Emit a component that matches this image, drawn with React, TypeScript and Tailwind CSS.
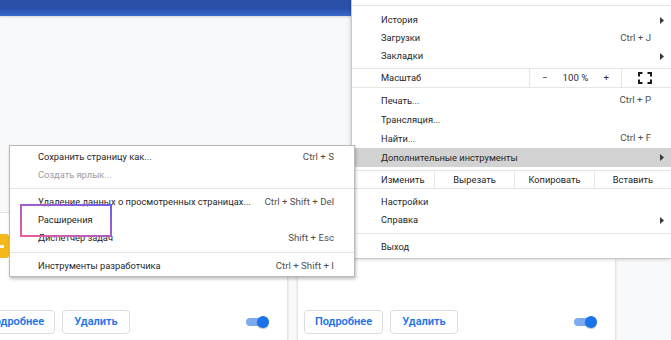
import React from "react";

const menuFont = { fontFamily: 'Roboto, "Noto Sans", sans-serif' };

function Arrow() {
  return (
    <svg width="4" height="7" viewBox="0 0 4 7" className="shrink-0">
      <polygon points="0,0 4,3.5 0,7" fill="#3a3a3a" />
    </svg>
  );
}

function MainRow({
  label,
  shortcut,
  arrow,
  h = "h-[18px]",
  highlight,
}: {
  label: string;
  shortcut?: string;
  arrow?: boolean;
  h?: string;
  highlight?: boolean;
}) {
  return (
    <div
      className={`${h} flex items-center pl-[29px] pr-[7px] ${
        highlight ? "bg-[#d2d2d2]" : ""
      }`}
    >
      <span className="flex-1 text-[#262626]">{label}</span>
      {shortcut && <span className="mr-[13px] text-[9.7px] text-[#505050]">{shortcut}</span>}
      {arrow && <Arrow />}
    </div>
  );
}

function SubRow({
  label,
  shortcut,
  disabled,
}: {
  label: string;
  shortcut?: string;
  disabled?: boolean;
}) {
  return (
    <div className="h-[18px] flex items-center pl-[28px] pr-[20px] whitespace-nowrap">
      <span className={`flex-1 ${disabled ? "text-[#9c9c9c]" : "text-[#262626]"}`}>
        {label}
      </span>
      {shortcut && <span className="text-[9.7px] text-[#505050]">{shortcut}</span>}
    </div>
  );
}

function Card({ withIcon }: { withIcon?: boolean }) {
  return (
    <div className="w-[319px] h-[150px] shrink-0 bg-white border border-[#e3e4e6] rounded-[4px] shadow-[0_1px_2px_rgba(60,64,67,0.15)] flex flex-col">
      <div className="pl-[15px] pt-[21px] h-[46px]">
        {withIcon && (
          <div className="w-[24px] h-[24px] rounded-[3px] bg-[#f5b81c] flex items-center justify-center">
            <div className="w-[14px] h-[3px] bg-white rounded-[1px]" />
          </div>
        )}
      </div>
      <div className="mt-[51px] flex items-center pl-[6px] pr-[18px]" style={{ fontFamily: "Roboto, sans-serif" }}>
        <button className="h-[24px] w-[79px] border border-[#dadce0] rounded-[4px] text-[11px] font-semibold text-[#1a73e8] bg-white">
          Подробнее
        </button>
        <button className="ml-[7px] h-[24px] w-[68px] border border-[#dadce0] rounded-[4px] text-[11px] font-semibold text-[#1a73e8] bg-white">
          Удалить
        </button>
        <div className="flex-1" />
        <div className="relative w-[23px] h-[12px] flex items-center">
          <div className="w-[20px] h-[8px] rounded-full bg-[#7baaf0]" />
          <div className="absolute right-0 top-0 w-[12px] h-[12px] rounded-full bg-[#1a73e8] shadow-[0_1px_1px_rgba(0,0,0,0.25)]" />
        </div>
      </div>
    </div>
  );
}

export default function App() {
  return (
    <div className="relative w-[671px] h-[340px] overflow-hidden bg-[#f8f9fa] text-[9.3px]" style={menuFont}>
      {/* header */}
      <div className="h-[16px] bg-gradient-to-b from-[#2a50a8] from-50% to-[#3769cc] shadow-[0_1px_2px_rgba(0,0,0,0.15)]" />

      {/* cards */}
      <div className="mt-[196px] -ml-[31px] flex gap-[9px]">
        <Card withIcon />
        <Card />
      </div>

      {/* main chrome menu */}
      <div className="absolute left-[351px] top-0 right-0 h-[259px] bg-white border-l border-b border-[#c9c9c9] shadow-[-1px_1px_3px_rgba(0,0,0,0.15)]">
        <div className="h-[5px]" />
        <div className="border-t border-[#e6e6e6]" />
        <div className="h-[5px]" />
        <MainRow label="История" arrow />
        <MainRow label="Загрузки" shortcut="Ctrl + J" />
        <MainRow label="Закладки" arrow />
        <div className="h-[3px]" />
        <div className="flex h-[20px] border-y border-[#e6e6e6]">
          <div className="w-[177px] pl-[29px] flex items-center text-[#262626]">Масштаб</div>
          <div className="w-[93px] border-x border-[#e6e6e6] flex items-center justify-center gap-[15px] text-[9.7px] text-[#303030]">
            <span>−</span>
            <span>100 %</span>
            <span>+</span>
          </div>
          <div className="flex-1 flex items-center justify-center pr-[3px]">
            <svg width="14" height="12" viewBox="0 0 14 12">
              <g fill="none" stroke="#1b1b1b" strokeWidth="2">
                <path d="M1 4.5V1H4.5" />
                <path d="M9.5 1H13V4.5" />
                <path d="M13 7.5V11H9.5" />
                <path d="M4.5 11H1V7.5" />
              </g>
            </svg>
          </div>
        </div>
        <div className="h-[3px]" />
        <MainRow label="Печать..." shortcut="Ctrl + P" h="h-[19px]" />
        <MainRow label="Трансляция..." h="h-[19px]" />
        <MainRow label="Найти..." shortcut="Ctrl + F" h="h-[19px]" />
        <MainRow label="Дополнительные инструменты" arrow h="h-[19px]" highlight />
        <div className="h-[3px]" />
        <div className="flex h-[19px] border-y border-[#e6e6e6] text-[#262626]">
          <div className="w-[82px] pl-[29px] flex items-center">Изменить</div>
          <div className="w-[80px] border-l border-[#e6e6e6] flex items-center justify-center">Вырезать</div>
          <div className="w-[80px] border-l border-[#e6e6e6] flex items-center justify-center">Копировать</div>
          <div className="flex-1 border-l border-[#e6e6e6] flex items-center justify-center">Вставить</div>
        </div>
        <div className="h-[4px]" />
        <MainRow label="Настройки" />
        <MainRow label="Справка" arrow />
        <div className="h-[4px]" />
        <div className="border-t border-[#e6e6e6]" />
        <div className="h-[4px]" />
        <MainRow label="Выход" />
      </div>

      {/* submenu */}
      <div className="absolute left-[9px] top-[145px] w-[346px] h-[132px] bg-white border border-[#b9b9b9] shadow-[1px_2px_3px_rgba(0,0,0,0.25)]">
        <div className="h-[2px]" />
        <SubRow label="Сохранить страницу как..." shortcut="Ctrl + S" />
        <SubRow label="Создать ярлык..." disabled />
        <div className="h-[4px]" />
        <div className="border-t border-[#e6e6e6]" />
        <div className="h-[4px]" />
        <SubRow label="Удаление данных о просмотренных страницах..." shortcut="Ctrl + Shift + Del" />
        <SubRow label="Расширения" />
        <SubRow label="Диспетчер задач" shortcut="Shift + Esc" />
        <div className="h-[5px]" />
        <div className="border-t border-[#e6e6e6]" />
        <div className="h-[4px]" />
        <SubRow label="Инструменты разработчика" shortcut="Ctrl + Shift + I" />
      </div>

      {/* highlight annotation */}
      <div className="absolute left-[20px] top-[204px] w-[92px] h-[33px] border-2 border-solid [border-image:linear-gradient(to_top_right,#ea5f96,#6b5cf0)_1]" />
    </div>
  );
}
